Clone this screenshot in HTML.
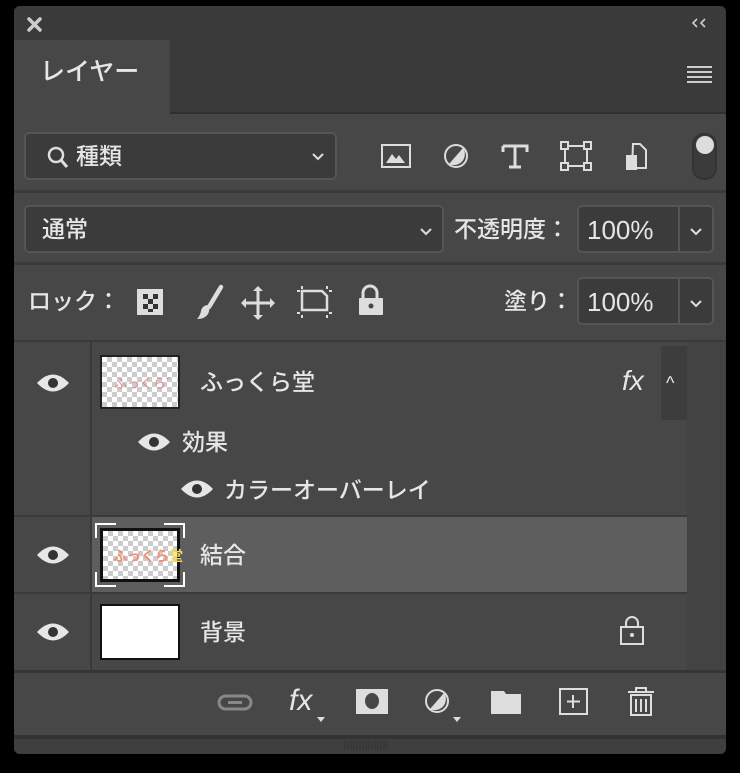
<!DOCTYPE html>
<html><head><meta charset="utf-8"><style>
*{margin:0;padding:0;box-sizing:border-box}
body{width:740px;height:773px;background:#000;position:relative;overflow:hidden;font-family:"Liberation Sans","Noto Sans CJK JP",sans-serif;color:#e6e6e6}
.a{position:absolute}
.panel{left:14px;top:6px;width:712px;height:748px;background:#474747;border-radius:6px;overflow:hidden}
.t{font-size:23px;white-space:nowrap;line-height:1;font-weight:500}
.box{background:#3b3b3b;border:2px solid #555;border-radius:5px}
.chk{background-color:#fff;background-image:linear-gradient(45deg,#ccc 25%,transparent 25%,transparent 75%,#ccc 75%),linear-gradient(45deg,#ccc 25%,transparent 25%,transparent 75%,#ccc 75%);background-size:10px 10px;background-position:0 0,5px 5px}
svg{position:absolute;overflow:visible}
</style></head><body>
<div class="a panel">
 <div class="a" style="left:0;top:0;width:712px;height:34px;background:#3a3a3a"></div>
 <div class="a" style="left:0;top:34px;width:712px;height:74px;background:#3a3a3a;border-bottom:2px solid #303030"></div>
 <div class="a" style="left:0;top:34px;width:156px;height:76px;background:#474747"></div>
 <div class="a t" style="left:26px;top:54px;font-size:25px">レイヤー</div>
 <div class="a" style="left:0;top:184px;width:712px;height:3px;background:#3a3a3a"></div>
 <div class="a" style="left:0;top:256px;width:712px;height:3px;background:#3a3a3a"></div>
 <div class="a box" style="left:10px;top:126px;width:313px;height:48px"></div>
 <div class="a t" style="left:62px;top:139px">種類</div>
 <div class="a box" style="left:10px;top:199px;width:420px;height:48px"></div>
 <div class="a t" style="left:28px;top:212px">通常</div>
 <div class="a t" style="left:440px;top:212px">不透明度：</div>
 <div class="a box" style="left:563px;top:199px;width:137px;height:48px"></div>
 <div class="a" style="left:664px;top:201px;width:2px;height:44px;background:#555"></div>
 <div class="a t" style="left:573px;top:211px;font-size:26px">100%</div>
 <div class="a t" style="left:14px;top:284px">ロック：</div>
 <div class="a t" style="left:490px;top:284px">塗り：</div>
 <div class="a box" style="left:563px;top:271px;width:137px;height:48px"></div>
 <div class="a" style="left:664px;top:273px;width:2px;height:44px;background:#555"></div>
 <div class="a t" style="left:573px;top:283px;font-size:26px">100%</div>
 <div class="a" style="left:0;top:334px;width:712px;height:2px;background:#3a3a3a"></div>
 <div class="a" style="left:673px;top:336px;width:39px;height:330px;background:#434343"></div>
 <div class="a" style="left:76px;top:336px;width:2px;height:330px;background:#3a3a3a"></div>
 <div class="a" style="left:647px;top:340px;width:26px;height:74px;background:#3d3d3d"></div>
 <div class="a" style="left:0;top:509px;width:673px;height:2px;background:#3a3a3a"></div>
 <div class="a" style="left:78px;top:511px;width:595px;height:75px;background:#5e5e5e"></div>
 <div class="a" style="left:0;top:586px;width:673px;height:2px;background:#3a3a3a"></div>
 <div class="a" style="left:0;top:664px;width:712px;height:3px;background:#353535"></div>
 <div class="a chk" style="left:86px;top:349px;width:80px;height:54px;border:2px solid #222"></div>
 <div class="a" style="left:100px;top:367px;font-size:13px;color:#e08a8a">ふっくら゛</div>
 <div class="a t" style="left:186px;top:365px">ふっくら堂</div>
 <div class="a t" style="left:608px;top:361px;font-style:italic;font-size:28px;font-weight:normal">fx</div>
 <div class="a t" style="left:652px;top:368px;font-size:18px">^</div>
 <div class="a t" style="left:168px;top:425px">効果</div>
 <div class="a t" style="left:210px;top:473px">カラーオーバーレイ</div>
 <div class="a chk" style="left:86px;top:522px;width:80px;height:54px;border:3px solid #111"></div>
 <div class="a" style="left:99px;top:540px;font-size:14px;font-weight:bold;color:#f09070">ふっくら<span style="color:#f0d860">堂</span></div>
 <svg style="left:80px;top:516px" width="92" height="66"><path d="M2 16V2H22M70 2H90V16M2 50V64H22M70 64H90V50" stroke="#fff" stroke-width="2" fill="none"/></svg>
 <div class="a t" style="left:186px;top:538px">結合</div>
 <div class="a" style="left:86px;top:598px;width:80px;height:56px;background:#fff;border:2px solid #111"></div>
 <div class="a t" style="left:186px;top:615px">背景</div>
 <div class="a" style="left:0;top:729px;width:712px;height:4px;background:#333"></div>
 <div class="a" style="left:0;top:733px;width:712px;height:15px;background:#3f3f3f"></div>
 <div class="a t" style="left:275px;top:680px;font-style:italic;font-size:30px;font-weight:normal">fx</div>
</div>
<svg style="left:0;top:0" width="740" height="773">
 <g stroke="#ccc" stroke-width="3.5" stroke-linecap="round"><path d="M29 19L40 30M40 19L29 30"/></g>
 <path d="M697 19l-4 4 4 4M705 19l-4 4 4 4" stroke="#ccc" stroke-width="1.6" fill="none"/>
 <path d="M687 67h25M687 72h25M687 77h25M687 82h25" stroke="#ccc" stroke-width="2"/>
 <circle cx="56" cy="155" r="7" stroke="#ddd" stroke-width="2.5" fill="none"/><path d="M61 160l6 7" stroke="#ddd" stroke-width="3"/>
 <path d="M313 154l5 5 5-5" stroke="#ddd" stroke-width="2" fill="none"/>
 <rect x="382" y="145" width="28" height="22" stroke="#ddd" stroke-width="2" fill="none"/><path d="M386 163l6-9 4 5 3-4 6 8z" fill="#ddd"/>
 <circle cx="456" cy="156" r="11" stroke="#ddd" stroke-width="2" fill="none"/><path d="M463 148a11 11 0 0 1-14 16z" fill="#ddd"/>
 <path d="M503 146h24v6M503 146v6M515 146v21M509 167h12" stroke="#ddd" stroke-width="3" fill="none"/>
 <rect x="565" y="146" width="22" height="20" stroke="#ddd" stroke-width="2" fill="none"/>
 <g fill="#474747" stroke="#ddd" stroke-width="2"><rect x="561" y="142" width="7" height="7"/><rect x="584" y="142" width="7" height="7"/><rect x="561" y="163" width="7" height="7"/><rect x="584" y="163" width="7" height="7"/></g>
 <path d="M633 144h7l6 6v18h-14z" stroke="#ddd" stroke-width="2" fill="none"/><rect x="626" y="155" width="11" height="15" fill="#ddd"/>
 <rect x="693" y="134" width="23" height="45" rx="11" stroke="#333" stroke-width="2" fill="#3b3b3b"/><circle cx="705" cy="145" r="9" fill="#ddd"/>
 <path d="M421 229l5 5 5-5M691 229l5 5 5-5M691 301l5 5 5-5" stroke="#ddd" stroke-width="2" fill="none"/>
 <rect x="137" y="289" width="26" height="26" fill="#ddd"/>
 <g fill="#333"><rect x="143" y="294" width="5" height="5"/><rect x="153" y="294" width="5" height="5"/><rect x="148" y="299" width="5" height="5"/><rect x="143" y="304" width="5" height="5"/><rect x="153" y="304" width="5" height="5"/><rect x="148" y="309" width="5" height="3"/></g>
 <path d="M221 287l-12 20" stroke="#ddd" stroke-width="4.5" stroke-linecap="round"/><path d="M207 305q-5 1-6 6q-1 5-4 8q8 0 11-5q2-4 1-7z" fill="#ddd"/>
 <path d="M258 288v30M243 303h30" stroke="#ddd" stroke-width="3"/><path d="M258 286l-5 5h10zM258 320l-5-5h10zM241 303l5-5v10zM275 303l-5-5v10z" fill="#ddd"/>
 <path d="M302 291h20l5 5v14h-25z" stroke="#ddd" stroke-width="2.5" fill="none"/><path d="M297 291h3M329 291h3M297 313h3M329 313h3M302 286v3M327 286v3M302 315v3M327 315v3" stroke="#ddd" stroke-width="2"/>
 <path d="M363 298v-5a7 7 0 0 1 14 0v5" stroke="#ddd" stroke-width="3" fill="none"/><rect x="359" y="298" width="24" height="17" rx="1" fill="#ddd"/><circle cx="371" cy="306" r="2.5" fill="#474747"/>
 <g fill="#e6e6e6">
  <path d="M37 383q16-17 32 0q-16 17-32 0z"/><path d="M37 555q16-17 32 0q-16 17-32 0z"/><path d="M37 632q16-17 32 0q-16 17-32 0z"/>
  <path d="M138 442q16-17 32 0q-16 17-32 0z"/><path d="M181 489q16-17 32 0q-16 17-32 0z"/>
 </g>
 <g fill="#333"><circle cx="53" cy="383" r="5"/><circle cx="53" cy="555" r="5"/><circle cx="53" cy="632" r="5"/><circle cx="154" cy="442" r="5"/><circle cx="197" cy="489" r="5"/></g>
 <path d="M626 627v-4a6 6 0 0 1 12 0v4" stroke="#ddd" stroke-width="2" fill="none"/><rect x="621" y="627" width="22" height="17" stroke="#ddd" stroke-width="2" fill="none"/><circle cx="632" cy="635" r="2" fill="#ddd"/>
 <rect x="219" y="696" width="32" height="13" rx="6.5" stroke="#888" stroke-width="3" fill="none"/><path d="M228 702.5h14" stroke="#888" stroke-width="3"/>
 <path d="M317 717l4 5 4-5z" fill="#ddd"/>
 <rect x="356" y="689" width="32" height="25" fill="#ddd"/><ellipse cx="372" cy="701" rx="7" ry="8" fill="#474747"/>
 <circle cx="437" cy="701" r="11" stroke="#ddd" stroke-width="2" fill="none"/><path d="M444 693a11 11 0 0 1-14 16z" fill="#ddd"/><path d="M453 717l4 5 4-5z" fill="#ddd"/>
 <path d="M491 691h13l2 3h15v20h-30z" fill="#ddd"/>
 <rect x="560" y="689" width="27" height="25" stroke="#ddd" stroke-width="2" fill="none"/><path d="M573 695v13M567 701.5h13" stroke="#ddd" stroke-width="2"/>
 <path d="M628 692h26M636 692v-4h10v4M631 695h20v20h-20z" stroke="#ddd" stroke-width="2" fill="none"/><path d="M636 699v13M641 699v13M646 699v13" stroke="#ddd" stroke-width="2"/>
 <path d="M345 740v10M348 740v10M351 740v10M354 740v10M357 740v10M360 740v10M363 740v10M366 740v10M369 740v10M372 740v10M375 740v10M378 740v10M381 740v10M384 740v10M387 740v10" stroke="#303030" stroke-width="1"/>
</svg>
</body></html>
